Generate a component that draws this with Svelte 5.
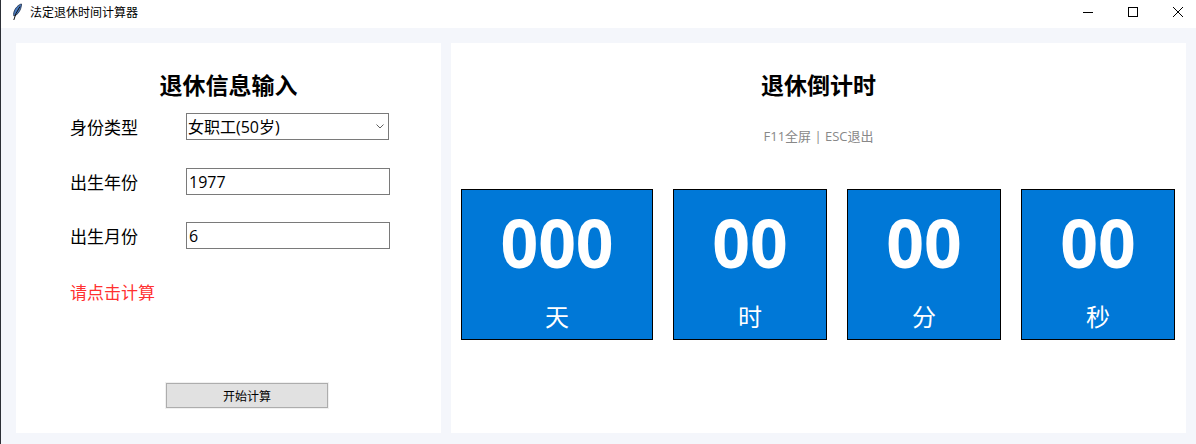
<script>
  let idType = $state("女职工(50岁)");
  let year = $state("1977");
  let month = $state("6");

  const types = ["男职工(60岁)", "女职工(50岁)", "女职工(55岁)"];
  const cards = [
    { value: "000", unit: "天" },
    { value: "00", unit: "时" },
    { value: "00", unit: "分" },
    { value: "00", unit: "秒" },
  ];
</script>

<div class="window">
  <header class="titlebar">
    <svg class="feather" viewBox="0 0 12 18" width="12" height="18" aria-hidden="true">
      <path d="M10.500 1C7.500 1.500 4 5 2.800 9.500c-.3 1.300-.3 2.700.1 3.500 3-.7 5.500-3.700 6.700-7.200.6-1.700 1-3.500.9-4.800z" fill="#4a7cc0" stroke="#1c2b45" stroke-width=".8" />
      <path d="M9 3.500 5 10.500 2.800 17" fill="none" stroke="#111" stroke-width="1" />
    </svg>
    <span class="app-title">法定退休时间计算器</span>
    <div class="controls">
      <svg viewBox="0 0 10 10" width="10" height="10" aria-hidden="true"><path d="M0 5.500h10" stroke="#000" fill="none" /></svg>
      <svg viewBox="0 0 10 10" width="10" height="10" aria-hidden="true"><rect x=".5" y=".5" width="9" height="9" stroke="#000" fill="none" /></svg>
      <svg viewBox="0 0 10 10" width="10" height="10" aria-hidden="true"><path d="M0 0l10 10M10 0 0 10" stroke="#000" fill="none" /></svg>
    </div>
  </header>

  <main class="content">
    <section class="panel form-panel">
      <h2>退休信息输入</h2>
      <div class="row">
        <label for="type">身份类型</label>
        <div class="select-wrap">
          <select id="type" bind:value={idType}>
            {#each types as t}
              <option value={t}>{t}</option>
            {/each}
          </select>
          <svg class="chevron" viewBox="0 0 8 5" width="8" height="5" aria-hidden="true"><path d="M.5.500 4 4 7.500.500" fill="none" stroke="#606060" /></svg>
        </div>
      </div>
      <div class="row">
        <label for="year">出生年份</label>
        <input id="year" bind:value={year} />
      </div>
      <div class="row">
        <label for="month">出生月份</label>
        <input id="month" bind:value={month} />
      </div>
      <p class="status">请点击计算</p>
      <button type="button">开始计算</button>
    </section>

    <section class="panel timer-panel">
      <h2>退休倒计时</h2>
      <p class="hint">F11全屏 | ESC退出</p>
      <div class="cards">
        {#each cards as card}
          <div class="card">
            <div class="value">{card.value}</div>
            <div class="unit">{card.unit}</div>
          </div>
        {/each}
      </div>
    </section>
  </main>
</div>

<style>
  :global(body) {
    margin: 0;
  }

  .window {
    box-sizing: border-box;
    width: 1196px;
    height: 444px;
    overflow: hidden;
    display: flex;
    flex-direction: column;
    border-left: 1px solid #2c2f36;
    background: #f4f6fb;
    font-family: "Open Sans", "Noto Sans CJK SC", sans-serif;
    color: #000;
  }

  .titlebar {
    height: 28px;
    flex: none;
    box-sizing: border-box;
    display: flex;
    align-items: center;
    padding: 0 0 4px 10px;
    background: #fff;
  }

  .feather {
    margin-right: 7px;
  }

  .app-title {
    font-size: 12px;
  }

  .controls {
    margin-left: auto;
    display: flex;
    gap: 35px;
    padding-right: 13px;
  }

  .content {
    flex: 1;
    display: flex;
    gap: 10px;
    padding: 15px 10px 11px 15px;
  }

  .panel {
    background: #fff;
    display: flex;
    flex-direction: column;
  }

  h2 {
    margin: 0;
    font-size: 23px;
    line-height: 32px;
    font-weight: 700;
    text-align: center;
  }

  .form-panel {
    width: 425px;
    flex: none;
    padding-top: 26px;
    box-sizing: border-box;
  }

  .row {
    display: flex;
    align-items: center;
    height: 27px;
    padding-left: 54px;
    margin-bottom: 27px;
  }

  .form-panel h2 {
    margin-bottom: 12px;
  }

  .row:first-of-type {
    margin-bottom: 28px;
  }

  label {
    width: 116px;
    flex: none;
    font-size: 17px;
  }

  .select-wrap {
    position: relative;
    width: 203px;
    height: 27px;
  }

  .chevron {
    position: absolute;
    right: 5px;
    top: 11px;
    pointer-events: none;
  }

  select,
  input {
    box-sizing: border-box;
    height: 27px;
    width: 204px;
    margin: 0;
    padding: 0 2px;
    border: 1px solid #7a7a7a;
    border-radius: 0;
    background: #fff;
    font: inherit;
    font-size: 16px;
    color: #000;
    outline: none;
  }

  select {
    display: block;
    width: 203px;
    padding: 0 1px;
    appearance: none;
  }

  .status {
    margin: 3px 0 0 54px;
    font-size: 17px;
    line-height: 27px;
    color: #ff3030;
  }

  button {
    box-sizing: border-box;
    width: 162px;
    height: 25px;
    margin: auto 0 25px 150px;
    padding: 0;
    border: 1px solid #adadad;
    box-shadow: 0 0 0 1px #f0f0f0;
    border-radius: 0;
    background: #e1e1e1;
    font: inherit;
    font-size: 12px;
    color: #000;
  }

  .timer-panel {
    flex: 1;
    padding-top: 26px;
  }

  .hint {
    margin: 26px 0 0;
    font-size: 13px;
    line-height: 18px;
    color: #888;
    text-align: center;
  }

  .cards {
    display: grid;
    grid-template-columns: 192px 154px 154px 154px;
    gap: 20px;
    padding-left: 10px;
    margin-top: 44px;
  }

  .card {
    box-sizing: border-box;
    height: 151px;
    border: 1px solid #000;
    background: #0078d7;
    color: #fff;
    text-align: center;
  }

  .value {
    font-size: 66px;
    font-weight: 700;
    line-height: 90px;
    margin-top: 7px;
  }

  .unit {
    font-size: 24px;
    line-height: 34px;
    margin-top: 13px;
  }
</style>
